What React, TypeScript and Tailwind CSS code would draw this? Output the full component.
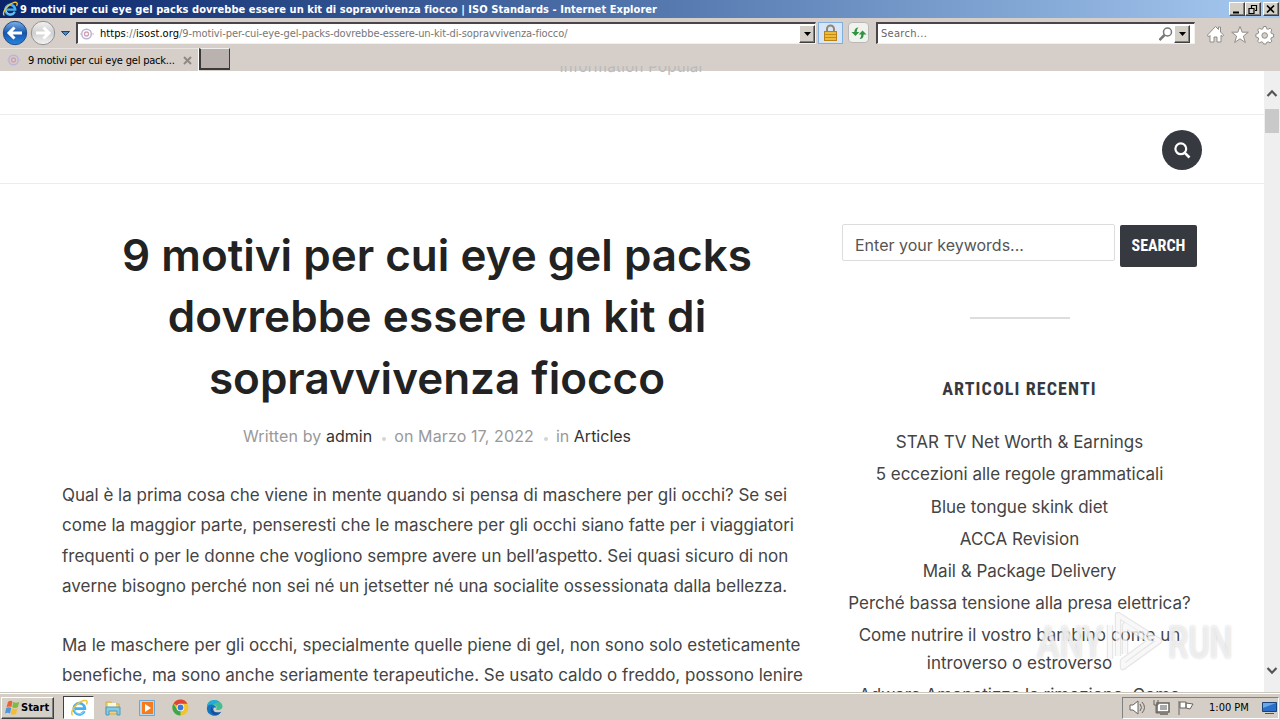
import type { ReactNode } from "react";

const ui = "font-['DejaVu_Sans_Condensed','DejaVu_Sans',sans-serif] [font-stretch:condensed]";
const raised =
  "border border-t-white border-l-white border-r-[#404040] border-b-[#404040] bg-[#d4d0c8] shadow-[inset_-1px_-1px_0_#808080]";

const articleLines = [
  [
    "Qual è la prima cosa che viene in mente quando si pensa di maschere per gli occhi? Se sei",
    "come la maggior parte, penseresti che le maschere per gli occhi siano fatte per i viaggiatori",
    "frequenti o per le donne che vogliono sempre avere un bell’aspetto. Sei quasi sicuro di non",
    "averne bisogno perché non sei né un jetsetter né una socialite ossessionata dalla bellezza.",
  ],
  [
    "Ma le maschere per gli occhi, specialmente quelle piene di gel, non sono solo esteticamente",
    "benefiche, ma sono anche seriamente terapeutiche. Se usato caldo o freddo, possono lenire",
  ],
];

const recent = [
  ["STAR TV Net Worth & Earnings"],
  ["5 eccezioni alle regole grammaticali"],
  ["Blue tongue skink diet"],
  ["ACCA Revision"],
  ["Mail & Package Delivery"],
  ["Perché bassa tensione alla presa elettrica?"],
  ["Come nutrire il vostro bambino come un", "introverso o estroverso"],
  ["Adware Amonetizze la rimozione. Come"],
];

export default function App() {
  return (
    <div className="flex h-[720px] w-[1280px] flex-col overflow-hidden bg-white">
      <TitleBar />
      <AddressBar />
      <TabBar />
      <div className="relative flex h-[621px]">
        <Page />
        <Scrollbar />
        <Watermark />
      </div>
      <Taskbar />
    </div>
  );
}

const TitleBar = () => (
  <div
    className={`flex h-[18px] shrink-0 items-center bg-linear-to-r from-[#0a246a] to-[#a6caf0] pl-[2px] pr-[1px] text-white ${ui}`}
  >
    <IeIcon size={16} />
    <span className="ml-[2px] flex-1 whitespace-nowrap pt-px text-[11px] font-bold leading-[18px] tracking-[0.06px]">
      9 motivi per cui eye gel packs dovrebbe essere un kit di sopravvivenza fiocco | ISO Standards - Internet Explorer
    </span>
    <WindowButton>
      <path d="M3 9.5h6" strokeWidth="2" />
    </WindowButton>
    <WindowButton>
      <path d="M5 2.5h6M5.5 2v3M10.5 2v5.5H9M2.5 5.5h6M3 5v5.5h5V5" strokeWidth="1.2" />
    </WindowButton>
    <div className="w-[2px]" />
    <WindowButton>
      <path d="m3 2.5 7 7m0-7-7 7" strokeWidth="1.7" />
    </WindowButton>
  </div>
);

const WindowButton = ({ children }: { children: ReactNode }) => (
  <div className={`h-[14px] w-4 ${raised}`}>
    <svg width="13" height="12" viewBox="0 0 13 12" fill="none" stroke="#000">
      {children}
    </svg>
  </div>
);

const IeIcon = ({ size }: { size: number }) => (
  <svg width={size} height={size} viewBox="0 0 20 20" fill="none" className="shrink-0">
    <path d="M16 13.500A6.200 6.200 0 1 1 16.500 10v.8H5.500" stroke="#45b1ee" strokeWidth="3" />
    <path d="M15.600 13.700A5.700 5.700 0 0 1 5 11.500" stroke="#9be2ff" strokeWidth="1" />
    <path d="M3 18C.2 16.500 3 10 8 5.800c5-4.200 10.500-5.700 11-2.600.1.800-.3 1.900-.8 2.800" stroke="#f4c535" strokeWidth="1.7" />
  </svg>
);

const Favicon = () => (
  <svg width="14" height="14" viewBox="0 0 14 14" fill="none" className="shrink-0">
    <circle cx="6.500" cy="7" r="4.800" stroke="#bbb4d9" strokeWidth="1.5" />
    <circle cx="6.500" cy="7" r="2" stroke="#cf9fae" strokeWidth="1.3" />
    <path d="M0 7h2m9 0h3" stroke="#d6b8c8" />
  </svg>
);

const NavButton = ({ forward }: { forward?: boolean }) => (
  <svg width="26" height="26" viewBox="0 0 26 26" className="shrink-0">
    <defs>
      <linearGradient id={forward ? "fwd" : "back"} x2="0" y2="1">
        <stop offset="0" stopColor={forward ? "#f2f2f2" : "#7fb2e8"} />
        <stop offset=".5" stopColor={forward ? "#cfcfd0" : "#1556ad"} />
        <stop offset="1" stopColor={forward ? "#f5f5f5" : "#2787e2"} />
      </linearGradient>
    </defs>
    <circle cx="13" cy="13" r="11.700" fill={forward ? "url(#fwd)" : "url(#back)"} stroke={forward ? "#929292" : "#254e85"} />
    <path
      d={forward ? "M6 13h13M13.500 7.500 19 13l-5.500 5.500" : "M20 13H8M12.500 7.500 7 13l5.500 5.500"}
      fill="none"
      stroke="#fff"
      strokeWidth="3"
    />
  </svg>
);

const DropButton = () => (
  <div className={`flex h-[18px] w-4 shrink-0 items-center justify-center ${raised}`}>
    <svg width="7" height="4" viewBox="0 0 7 4">
      <path d="M0 0h7L3.500 4Z" />
    </svg>
  </div>
);

const field =
  "flex h-[22px] items-center border-t-2 border-l-2 border-b border-r border-t-[#49454a] border-l-[#49454a] border-b-[#f4f0ea] border-r-[#f4f0ea] bg-white";

const AddressBar = () => (
  <div className={`flex h-[30px] shrink-0 items-start bg-[#d5cec9] pt-[4px] text-[11px] ${ui}`}>
    <div className="-mt-[2px] ml-[2px] flex gap-[2px]">
      <NavButton />
      <NavButton forward />
    </div>
    <svg width="9" height="5" viewBox="0 0 9 5" className="ml-[5px] mt-[9px]">
      <path d="M.5.5h8l-4 4Z" fill="#4a8ac9" stroke="#21436b" />
    </svg>
    <div className={`ml-[6px] w-[740px] pl-[2px] ${field}`}>
      <Favicon />
      <span className="ml-[6px] flex-1 whitespace-nowrap pt-[2px] text-[#777]">
        <span className="tracking-[0.07px]">
          <span className="text-black">https</span>://<span className="text-black">isost.org</span>
        </span>
        <span className="tracking-[-0.1px]">
          /9-motivi-per-cui-eye-gel-packs-dovrebbe-essere-un-kit-di-sopravvivenza-fiocco/
        </span>
      </span>
      <DropButton />
    </div>
    <div className="ml-[2px] flex h-[22px] w-[25px] items-center justify-center border border-[#80afe0] bg-[#d6e5f8]">
      <svg width="15" height="18" viewBox="0 0 15 18">
        <path d="M4 8V5a3.500 3.500 0 0 1 7 0v3" fill="none" stroke="#91866e" strokeWidth="2" />
        <rect x="1.500" y="7.500" width="12" height="9" fill="#edbb36" stroke="#b98119" />
        <path d="M2 10.500h11M2 13.500h11" stroke="#c58b1b" />
      </svg>
    </div>
    <div className="ml-[5px] flex h-[21px] w-[21px] items-center justify-center rounded-sm border border-[#b8b8b8] bg-[#f1f2ee]">
      <svg width="17" height="16" viewBox="0 0 17 16" fill="#2d9441">
        <path d="M8.500 2.500Q6.800 3.500 6.700 7h2.600L5.500 11 1.500 7h2.800Q4.500 2.500 8.500 2.500Z" />
        <path d="M9.500 14q1.700-1 1.800-4.500H8.700l3.800-4 4 4h-2.800q-.2 4.500-4.200 4.500Z" />
      </svg>
    </div>
    <div className={`ml-[7px] w-[319px] pl-[3px] ${field}`}>
      <span className="flex-1 pt-[2px] tracking-[0.300px] text-[#666]">Search...</span>
      <svg width="14" height="14" viewBox="0 0 14 14" fill="none" stroke="#777" className="mr-[1px]">
        <circle cx="8.500" cy="5" r="4" strokeWidth="1.500" />
        <path d="m5.500 8-5 5" strokeWidth="2.500" />
      </svg>
      <DropButton />
      <div className="w-[4px]" />
    </div>
    <svg width="68" height="20" viewBox="0 0 68 20" className="ml-[12px] mt-[3px]" fill="#fff" stroke="#918c87">
      <path d="M.5 10 8.500 1.500l3 3V2h2v5l3 3-1 1.500-1.500-1.200V17h-4v-5H7v5H3v-6.500L1.500 12Z" />
      <path d="m33 1.500 2.200 5.700h6.100l-4.900 3.900 1.900 6.400-5.300-3.700-5.300 3.700 1.900-6.400-4.900-3.900h6.100Z" />
      <path d="M56.500 1.500h2.500l.6 2.200 1.500.6 2-1.100 1.800 1.800-1.100 2 .6 1.500 2.200.6V12l-2.200.6-.6 1.500 1.100 2-1.800 1.800-2-1.100-1.500.6-.6 1.600h-2.500l-.6-1.600-1.500-.6-2 1.100-1.800-1.800 1.100-2-.6-1.500-2.200-.6V9.100l2.200-.6.600-1.500-1.100-2 1.800-1.800 2 1.100 1.500-.6Z" />
      <circle cx="57.700" cy="10.500" r="2.800" fill="#d5cec9" />
    </svg>
  </div>
);

const TabBar = () => (
  <div className={`flex h-[23px] shrink-0 bg-[#d5cec9] text-[11px] ${ui}`}>
    <div className="flex w-[199px] items-center border-r border-t border-r-[#fff] border-t-[#e9e4df] pl-[7px]">
      <Favicon />
      <span className="ml-[7px] w-[155px] whitespace-nowrap pt-[2px] tracking-[-0.2px]">9 motivi per cui eye gel pack...</span>
      <svg width="9" height="9" viewBox="0 0 9 9" stroke="#8f8985" strokeWidth="2">
        <path d="m1 1 7 7m0-7L1 8" />
      </svg>
    </div>
    <div className="h-[22px] w-[31px] border border-b-2 border-l-2 border-[#3e3939] border-t-[#eee] bg-[#bab2af]" />
  </div>
);

const Page = () => (
  <div className="flex w-[1264px] shrink-0 flex-col overflow-visible font-[Inter,sans-serif] text-[#444]">
    <div className="flex h-[44px] shrink-0 justify-center border-b border-[#ececec]">
      <p className="-mt-[14px] h-5 text-[15px] leading-5 tracking-[0.300px] text-[#bbb] [clip-path:inset(9px_0_0_0)]">
        Information Popular
      </p>
    </div>
    <div className="flex h-[69px] shrink-0 items-center justify-end border-b border-[#ececec] pr-[62px] pt-[2px]">
      <button className="flex size-10 items-center justify-center rounded-full bg-[#363940]">
        <svg width="18" height="18" viewBox="0 0 18 18" fill="none" stroke="#fff">
          <circle cx="7.800" cy="7.800" r="5.400" strokeWidth="2.200" />
          <path d="m11.800 11.800 4.700 4.700" strokeWidth="2.600" />
        </svg>
      </button>
    </div>
    <div className="flex h-[508px] overflow-hidden">
      <Article />
      <Sidebar />
    </div>
  </div>
);

const Article = () => (
  <main className="ml-[62px] w-[750px] shrink-0 pt-[41px]">
    <h1 className="text-center text-[44px] font-semibold leading-[61.400px] text-[#222]">
      9 motivi per cui eye gel packs
      <br />
      <span className="tracking-[0.150px]">dovrebbe essere un kit di</span>
      <br />
      sopravvivenza fiocco
    </h1>
    <div className="mt-[15px] flex h-6 items-center justify-center text-[16px] text-[#999]">
      <span className="tracking-[0.140px]">Written by&nbsp;</span>
      <span className="text-[#333]">admin</span>
      <span className="ml-[10px] mr-[8px] mt-[5px] size-1 rounded-full bg-[#d5d5d5]" />
      <span className="tracking-[0.120px]">on Marzo 17, 2022</span>
      <span className="ml-[10px] mr-[8px] mt-[5px] size-1 rounded-full bg-[#d5d5d5]" />
      in&nbsp;<span className="text-[#333]">Articles</span>
    </div>
    <div className="mt-[31.700px] text-[17px] leading-[30.400px] tracking-[-0.010px]">
      {articleLines.map((lines, i) => (
        <p key={i} className="mb-[28.500px] whitespace-nowrap">
          {lines.map((line) => (
            <span key={line} className="block">
              {line}
            </span>
          ))}
        </p>
      ))}
    </div>
  </main>
);

const Sidebar = () => (
  <aside className="ml-[30px] w-[355px] pt-[40px]">
    <div className="flex items-start gap-[5px]">
      <div className="flex h-[37px] w-[273px] items-center rounded-xs border border-[#ddd] pl-[12px] pt-[4px] text-[16px] text-[#555]">
        Enter your keywords...
      </div>
      <button className="mt-px flex h-[42px] w-[77px] items-center justify-center rounded-xs bg-[#363940] font-['Roboto_Condensed',Roboto,sans-serif] text-[16px] font-bold text-white">
        SEARCH
      </button>
    </div>
    <div className="mx-auto mt-[50px] h-[2px] w-[100px] bg-[#ddd]" />
    <h3 className="mt-[58px] text-center font-['Roboto_Condensed',Roboto,sans-serif] text-[18px] font-bold leading-6 tracking-[1.100px] text-[#363940]">
      ARTICOLI RECENTI
    </h3>
    <ul className="mt-[27.300px] text-center text-[17px] leading-[28px]">
      {recent.map((item) => (
        <li key={item[0]} className="mb-[4.150px] whitespace-nowrap">
          {item.map((line) => (
            <span key={line} className="block">
              {line}
            </span>
          ))}
        </li>
      ))}
    </ul>
  </aside>
);

const Scrollbar = () => (
  <div className="flex w-4 shrink-0 flex-col items-center bg-[#efefef] pt-[18px]">
    <svg width="12" height="9" viewBox="0 0 12 9" fill="none" stroke="#555" strokeWidth="2.200">
      <path d="M1.500 7 6 2.300 10.500 7" />
    </svg>
    <div className="mt-[11px] h-[24px] w-[14px] bg-[#c9c9c9]" />
    <svg width="12" height="9" viewBox="0 0 12 9" fill="none" stroke="#555" strokeWidth="2.200" className="mb-[17px] mt-auto">
      <path d="M1.500 2 6 6.700 10.500 2" />
    </svg>
  </div>
);

const Watermark = () => (
  <div className="absolute left-[1037px] top-[541px] flex h-[60px] items-center font-[Roboto,sans-serif] text-[45px] font-medium leading-none text-white/60 [text-shadow:0_0_3px_#ccc]">
    <span className="w-[68px]">
      <span className="inline-block origin-left scale-x-[0.750]">ANY</span>
    </span>
    <svg width="60" height="60" viewBox="0 0 60 60" fill="none" strokeLinejoin="round">
      <path d="M5 13v34M13 44V3l41 26-36 26v-6l27-20-25-16v29" stroke="#bbb" strokeOpacity=".35" strokeWidth="6.500" />
      <path d="M5 13v34M13 44V3l41 26-36 26v-6l27-20-25-16v29" stroke="#fff" strokeOpacity=".7" strokeWidth="4" />
    </svg>
    <span className="ml-[3px] inline-block origin-left scale-x-[0.720]">RUN</span>
  </div>
);

const Taskbar = () => (
  <div className={`flex h-[28px] shrink-0 items-center border-t border-[#c9c6bd] bg-[#d5cec7] pl-px pt-[2px] text-[11px] shadow-[inset_0_1px_0_#fff] ${ui}`}>
    <button className={`flex h-[22px] w-[53px] items-center pl-[3px] font-bold ${raised}`}>
      <svg width="15" height="15" viewBox="0 0 15 15">
        <path d="M3 2q2-2 4.500-.5L6.400 7Q4 5.800 1.500 7Z" fill="#e96434" />
        <path d="M8.300 2q2.500 1.300 6 0l-1.500 5.300q-3 1.300-5.600 0Z" fill="#80b943" />
        <path d="M1.200 8q2.500-1.300 5 0L5 13.500q-2.500-1.500-5 0Z" fill="#5195d6" />
        <path d="M7 8.300q3 1.300 5.500 0L11 14q-2.800 1.300-5.400 0Z" fill="#f3bd35" />
      </svg>
      <span className="ml-[1px] pt-px">Start</span>
    </button>
    <div className="ml-[9px] flex h-[23px] w-[31px] items-center justify-center border border-b-white border-l-[#404040] border-r-white border-t-[#404040] bg-white">
      <IeIcon size={18} />
    </div>
    <svg width="18" height="18" viewBox="0 0 18 18" className="ml-[10px]">
      <path d="M2 3h5l1 2h7v10H2Z" fill="#f2d477" stroke="#d0ad52" />
      <path d="M4 4h8v4H4Z" fill="#fff8d5" />
      <path d="M2 8h14v8h-3v-4H5v4H2Z" fill="#83c9e8" stroke="#5297b5" />
    </svg>
    <svg width="18" height="18" viewBox="0 0 18 18" className="ml-[16px]">
      <path d="M1.500 1.500h15v15h-15Z" fill="#b8d8f0" stroke="#6ca6d1" />
      <path d="M4 3h11v12H4Z" fill="#f47c1f" />
      <path d="m7 5 6 4-6 4Z" fill="#fff" />
    </svg>
    <svg width="17" height="17" viewBox="0 0 18 18" className="ml-[16px]">
      <circle cx="9" cy="9" r="8.500" fill="#f2c42f" />
      <path d="M9 9 1.600 4.700A8.500 8.500 0 0 1 16.400 5H9Z" fill="#df4435" />
      <path d="M9 9v8.500A8.500 8.500 0 0 1 1.600 4.700l3.900 6.600Z" fill="#38a852" />
      <circle cx="9" cy="9" r="4" fill="#fff" />
      <circle cx="9" cy="9" r="3.100" fill="#3979df" />
    </svg>
    <svg width="17" height="17" viewBox="0 0 18 18" className="ml-[17px]">
      <path d="M1 8.500C1 3 5 1 9 1s8.500 3 8.500 7c0 3.500-4.500 4.500-7 3 2-2.500 0-5-3-5C4 6 1 8 1 8.500Z" fill="#42bf91" />
      <path d="M1 8.500C1 4 5 1 9 1c2.500 0 4.500 1 5.500 2.500C10 3 9 6 7.500 6 4 6 1.500 7.500 1 8.500Z" fill="#28a9dc" />
      <path d="M1 9c.5-2 3.500-3.500 6-3 2.500.3 4 2 3.800 3.500-.3-.8-3-.8-3.200 1.500-.2 3 4.400 4.500 8.400 2.500A8 8 0 0 1 1 9Z" fill="#1674be" />
      <path d="M6 8.500c-2.500 3-.5 8 4 8.500 2.500 0 4.700-1.500 6-3.500-4 2-8.600.5-8.400-2.500Z" fill="#17529f" />
    </svg>
    <div className="ml-auto mr-px flex h-[22px] w-[157px] items-center border border-b-white border-l-[#808080] border-r-white border-t-[#808080] pl-[6px]">
      <svg width="67" height="17" viewBox="0 0 67 17" fill="#fff" stroke="#69645f">
        <path d="M1 6h3l5-4v13l-5-4H1Z" />
        <path d="M11 5q3 3.500 0 7M13 3q5 5.500 0 11" fill="none" />
        <path d="M28 4h12v9H28ZM31 15h8" strokeWidth="1.500" />
        <path d="M31 6h7v5h-7Z" fill="#aaa" stroke="none" />
        <path d="M25 1v5h4V1M27 6v8h4" fill="none" />
        <path d="M50 2v14M51 3h6v6h-6ZM57 4l7 1-3 5-4-1Z" />
      </svg>
      <span className="ml-[13px] whitespace-nowrap pt-px">1:00 PM</span>
      <svg width="17" height="15" viewBox="0 0 17 15" className="ml-auto">
        <path d="M1.500 2.500h14v9h-14Z" fill="#2b70c8" stroke="#174377" />
        <path d="M2 3h13L2 8Z" fill="#69a8e7" />
        <path d="M4 13.500h9" stroke="#525252" />
      </svg>
    </div>
  </div>
);
